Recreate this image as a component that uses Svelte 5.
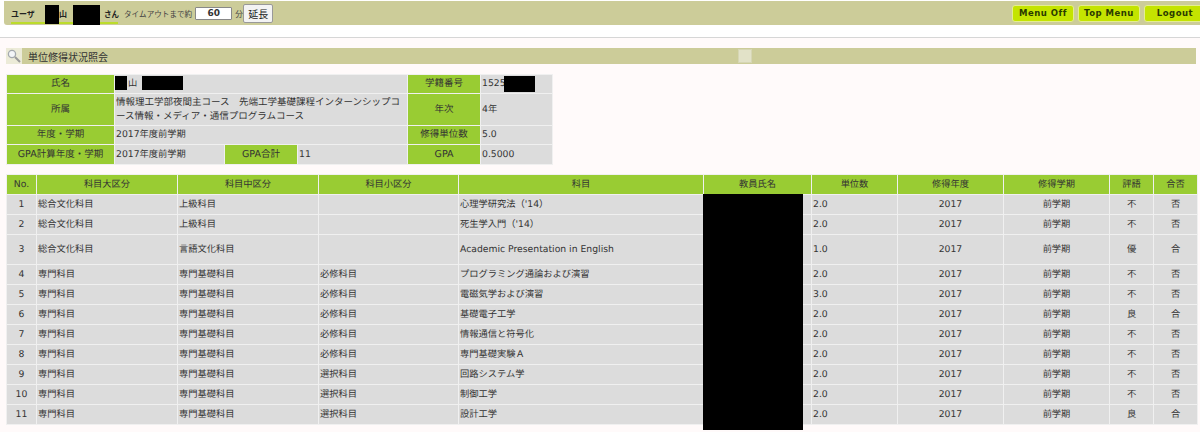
<script>
  const rows = [
    { no: 1, big: "総合文化科目", mid: "上級科目", small: "", name: "心理学研究法（'14）", unit: "2.0", grade: "不", pass: "否" },
    { no: 2, big: "総合文化科目", mid: "上級科目", small: "", name: "死生学入門（'14）", unit: "2.0", grade: "不", pass: "否" },
    { no: 3, big: "総合文化科目", mid: "言語文化科目", small: "", name: "Academic Presentation in English", unit: "1.0", grade: "優", pass: "合", tall: true },
    { no: 4, big: "専門科目", mid: "専門基礎科目", small: "必修科目", name: "プログラミング通論および演習", unit: "2.0", grade: "不", pass: "否" },
    { no: 5, big: "専門科目", mid: "専門基礎科目", small: "必修科目", name: "電磁気学および演習", unit: "3.0", grade: "不", pass: "否" },
    { no: 6, big: "専門科目", mid: "専門基礎科目", small: "必修科目", name: "基礎電子工学", unit: "2.0", grade: "良", pass: "合" },
    { no: 7, big: "専門科目", mid: "専門基礎科目", small: "必修科目", name: "情報通信と符号化", unit: "2.0", grade: "不", pass: "否" },
    { no: 8, big: "専門科目", mid: "専門基礎科目", small: "必修科目", name: "専門基礎実験Ａ", unit: "2.0", grade: "不", pass: "否" },
    { no: 9, big: "専門科目", mid: "専門基礎科目", small: "選択科目", name: "回路システム学", unit: "2.0", grade: "不", pass: "否" },
    { no: 10, big: "専門科目", mid: "専門基礎科目", small: "選択科目", name: "制御工学", unit: "2.0", grade: "不", pass: "否" },
    { no: 11, big: "専門科目", mid: "専門基礎科目", small: "選択科目", name: "設計工学", unit: "2.0", grade: "良", pass: "合" }
  ];

  const heads = ["No.", "科目大区分", "科目中区分", "科目小区分", "科目", "教員氏名", "単位数", "修得年度", "修得学期", "評語", "合否"];
  const widths = [30, 141, 141, 140, 245, 108, 86, 106, 106, 44, 44];
  const infoWidths = [108, 110, 73, 110, 73, 72];
</script>

<div class="page">
  <header class="topbar">
    <div class="user">
      <span class="label">ユーザ</span>
      <i class="ink first"></i>
      <span>山</span>
      <i class="ink last"></i>
      <span class="san">さん</span>
    </div>
    <span class="timeout">タイムアウトまで約</span>
    <input class="minutes" value="60" readonly />
    <span class="timeout unit">分</span>
    <button class="extend">延長</button>
    <nav class="menu">
      <button>Menu Off</button>
      <button>Top Menu</button>
      <button>Logout</button>
    </nav>
  </header>
  <div class="rule"></div>

  <main>
    <div class="title">
      <span class="lens">
        <svg width="14" height="14" viewBox="0 0 14 14">
          <circle cx="5" cy="5" r="3.6" fill="#f4f6f8" stroke="#a4a9ae" stroke-width="1.3" />
          <path d="M8 8l5 5" stroke="#9a9a9a" stroke-width="2" />
        </svg>
      </span>
      <h1>単位修得状況照会</h1>
      <span class="notch"></span>
    </div>

    <table class="info">
      <colgroup>
        {#each infoWidths as w}
          <col style="width:{w}px" />
        {/each}
      </colgroup>
      <tbody>
        <tr class="r1">
          <th>氏名</th>
          <td colspan="3" class="redacted"><i class="ink a"></i><span class="yama">山</span><i class="ink b"></i></td>
          <th>学籍番号</th>
          <td class="redacted">1525<i class="ink d"></i></td>
        </tr>
        <tr class="r2">
          <th>所属</th>
          <td colspan="3" class="course">情報理工学部夜間主コース　先端工学基礎課程インターンシップコース情報・メディア・通信プログラムコース</td>
          <th>年次</th>
          <td>4年</td>
        </tr>
        <tr class="r1">
          <th>年度・学期</th>
          <td colspan="3">2017年度前学期</td>
          <th>修得単位数</th>
          <td>5.0</td>
        </tr>
        <tr class="r3">
          <th>GPA計算年度・学期</th>
          <td>2017年度前学期</td>
          <th>GPA合計</th>
          <td>11</td>
          <th>GPA</th>
          <td>0.5000</td>
        </tr>
      </tbody>
    </table>

    <div class="results">
      <table class="list">
        <colgroup>
          {#each widths as w}
            <col style="width:{w}px" />
          {/each}
        </colgroup>
        <thead>
          <tr>
            {#each heads as h}
              <th>{h}</th>
            {/each}
          </tr>
        </thead>
        <tbody>
          {#each rows as r}
            <tr class:tall={r.tall}>
              <td class="c">{r.no}</td>
              <td>{r.big}</td>
              <td>{r.mid}</td>
              <td>{r.small}</td>
              <td>{r.name}</td>
              <td></td>
              <td>{r.unit}</td>
              <td class="c">2017</td>
              <td class="c">前学期</td>
              <td class="c">{r.grade}</td>
              <td class="c">{r.pass}</td>
            </tr>
          {/each}
        </tbody>
      </table>
      <div class="blackout"></div>
    </div>
  </main>
</div>

<style>
  :global(body) {
    margin: 0;
    background: #fff;
    font-family: Verdana, "DejaVu Sans", "Noto Sans CJK JP", sans-serif;
    color: #333;
  }

  .page {
    height: 432px;
    overflow: hidden;
  }

  .topbar {
    display: flex;
    align-items: center;
    height: 24px;
    margin: 1px 0 0 4px;
    padding-left: 7px;
    background: #cccc99;
    border-bottom-left-radius: 3px;
  }

  .user {
    display: flex;
    align-items: center;
    flex: none;
    width: 107px;
    height: 24px;
    margin-right: 6px;
    background: linear-gradient(#bcdc2c, #bcdc2c) bottom 1px left / 100% 2px no-repeat;
    font-weight: bold;
    font-size: 8px;
    color: #222;
    white-space: nowrap;
  }

  .label {
    flex: none;
    width: 34px;
  }

  .ink {
    display: block;
    background: #000;
  }

  .first {
    flex: none;
    width: 14px;
    height: 19px;
    margin-top: 2px;
  }

  .last {
    flex: none;
    width: 27px;
    height: 20px;
    margin: 3px 4px 0 6px;
  }

  .san {
    flex: none;
    width: 14px;
    font-size: 7.5px;
  }

  .timeout {
    font-size: 7.6px;
    color: #444;
    white-space: nowrap;
  }

  .unit {
    margin-left: 3px;
    width: 8px;
  }

  .minutes {
    box-sizing: border-box;
    width: 37px;
    height: 13px;
    margin-left: 3px;
    padding: 0;
    border: 1px solid #888;
    border-radius: 1px;
    background: #fff;
    text-align: center;
    font: bold 9px "DejaVu Sans", sans-serif;
    color: #333;
  }

  .extend {
    box-sizing: border-box;
    width: 30px;
    height: 19px;
    padding: 0;
    border: 1px solid #999;
    border-radius: 2px;
    background: #f3f3f3;
    font: 10px "Noto Sans CJK JP", sans-serif;
    color: #222;
  }

  .menu {
    display: flex;
    gap: 4px;
    margin-left: auto;
    margin-right: -6px;
    flex: none;
  }

  .menu button {
    box-sizing: border-box;
    width: 62px;
    height: 17px;
    padding: 0;
    border: 1px solid #e4ee90;
    border-radius: 3px;
    background: #c4e400;
    font: bold 8.5px/1 "DejaVu Sans", sans-serif;
    letter-spacing: 0.5px;
    color: #2a3a00;
  }

  .rule {
    height: 12px;
    border-bottom: 1px solid #d6d6d6;
    box-shadow: 0 1px 1px #e8e8e8;
  }

  main {
    background: #fffafa;
    height: 394px;
    padding: 10px 4px 0 6px;
    box-sizing: border-box;
  }

  .title {
    display: flex;
    align-items: center;
    height: 16px;
    background: #cccc99;
  }

  .lens {
    display: flex;
    align-items: center;
    justify-content: center;
    width: 16px;
    height: 16px;
    background: #ecebd8;
  }

  h1 {
    margin: 0 0 0 6px;
    width: 710px;
    font: 10px "Noto Sans CJK JP", sans-serif;
    color: #333;
  }

  .notch {
    box-sizing: border-box;
    width: 14px;
    height: 14px;
    border: 1px solid #d6d6b4;
    background: #e2e2c8;
  }

  table {
    table-layout: fixed;
    border-collapse: collapse;
    font-size: 9.25px;
    line-height: 14px;
    text-rendering: geometricPrecision;
  }

  th, td {
    box-sizing: border-box;
    padding: 0 1px;
    border: 1px solid #f0f0f0;
    font-weight: normal;
    overflow: hidden;
    white-space: nowrap;
  }

  th {
    background: #99cc33;
    text-align: center;
    color: #333;
  }

  td {
    background: #dcdcdc;
  }

  .info {
    width: 546px;
    margin-top: 10px;
  }

  .info th {
    font-size: 9.5px;
  }

  .info td {
    white-space: normal;
    line-break: anywhere;
  }

  .info .course {
    padding-right: 3px;
    font-size: 9.5px;
  }

  .info .r1 {
    height: 19px;
  }

  .info .r2 {
    height: 32px;
  }

  .info .r3 {
    height: 20px;
  }

  .redacted {
    position: relative;
  }

  .yama {
    margin-left: 12px;
  }

  .redacted .ink {
    position: absolute;
  }

  .a {
    left: 0;
    top: 1px;
    width: 12px;
    height: 14px;
  }

  .b {
    left: 27px;
    top: 1px;
    width: 41px;
    height: 14px;
  }

  .d {
    left: 23px;
    top: 1px;
    width: 31px;
    height: 16px;
  }

  .c {
    text-align: center;
  }

  .results {
    position: relative;
    margin-top: 9px;
  }

  .list {
    width: 1190px;
  }

  .list thead tr,
  .list tbody tr {
    height: 20px;
  }

  .list tbody tr.tall {
    height: 30px;
  }

  .blackout {
    position: absolute;
    left: 697px;
    top: 20px;
    width: 100px;
    height: 236px;
    background: #000;
  }
</style>
